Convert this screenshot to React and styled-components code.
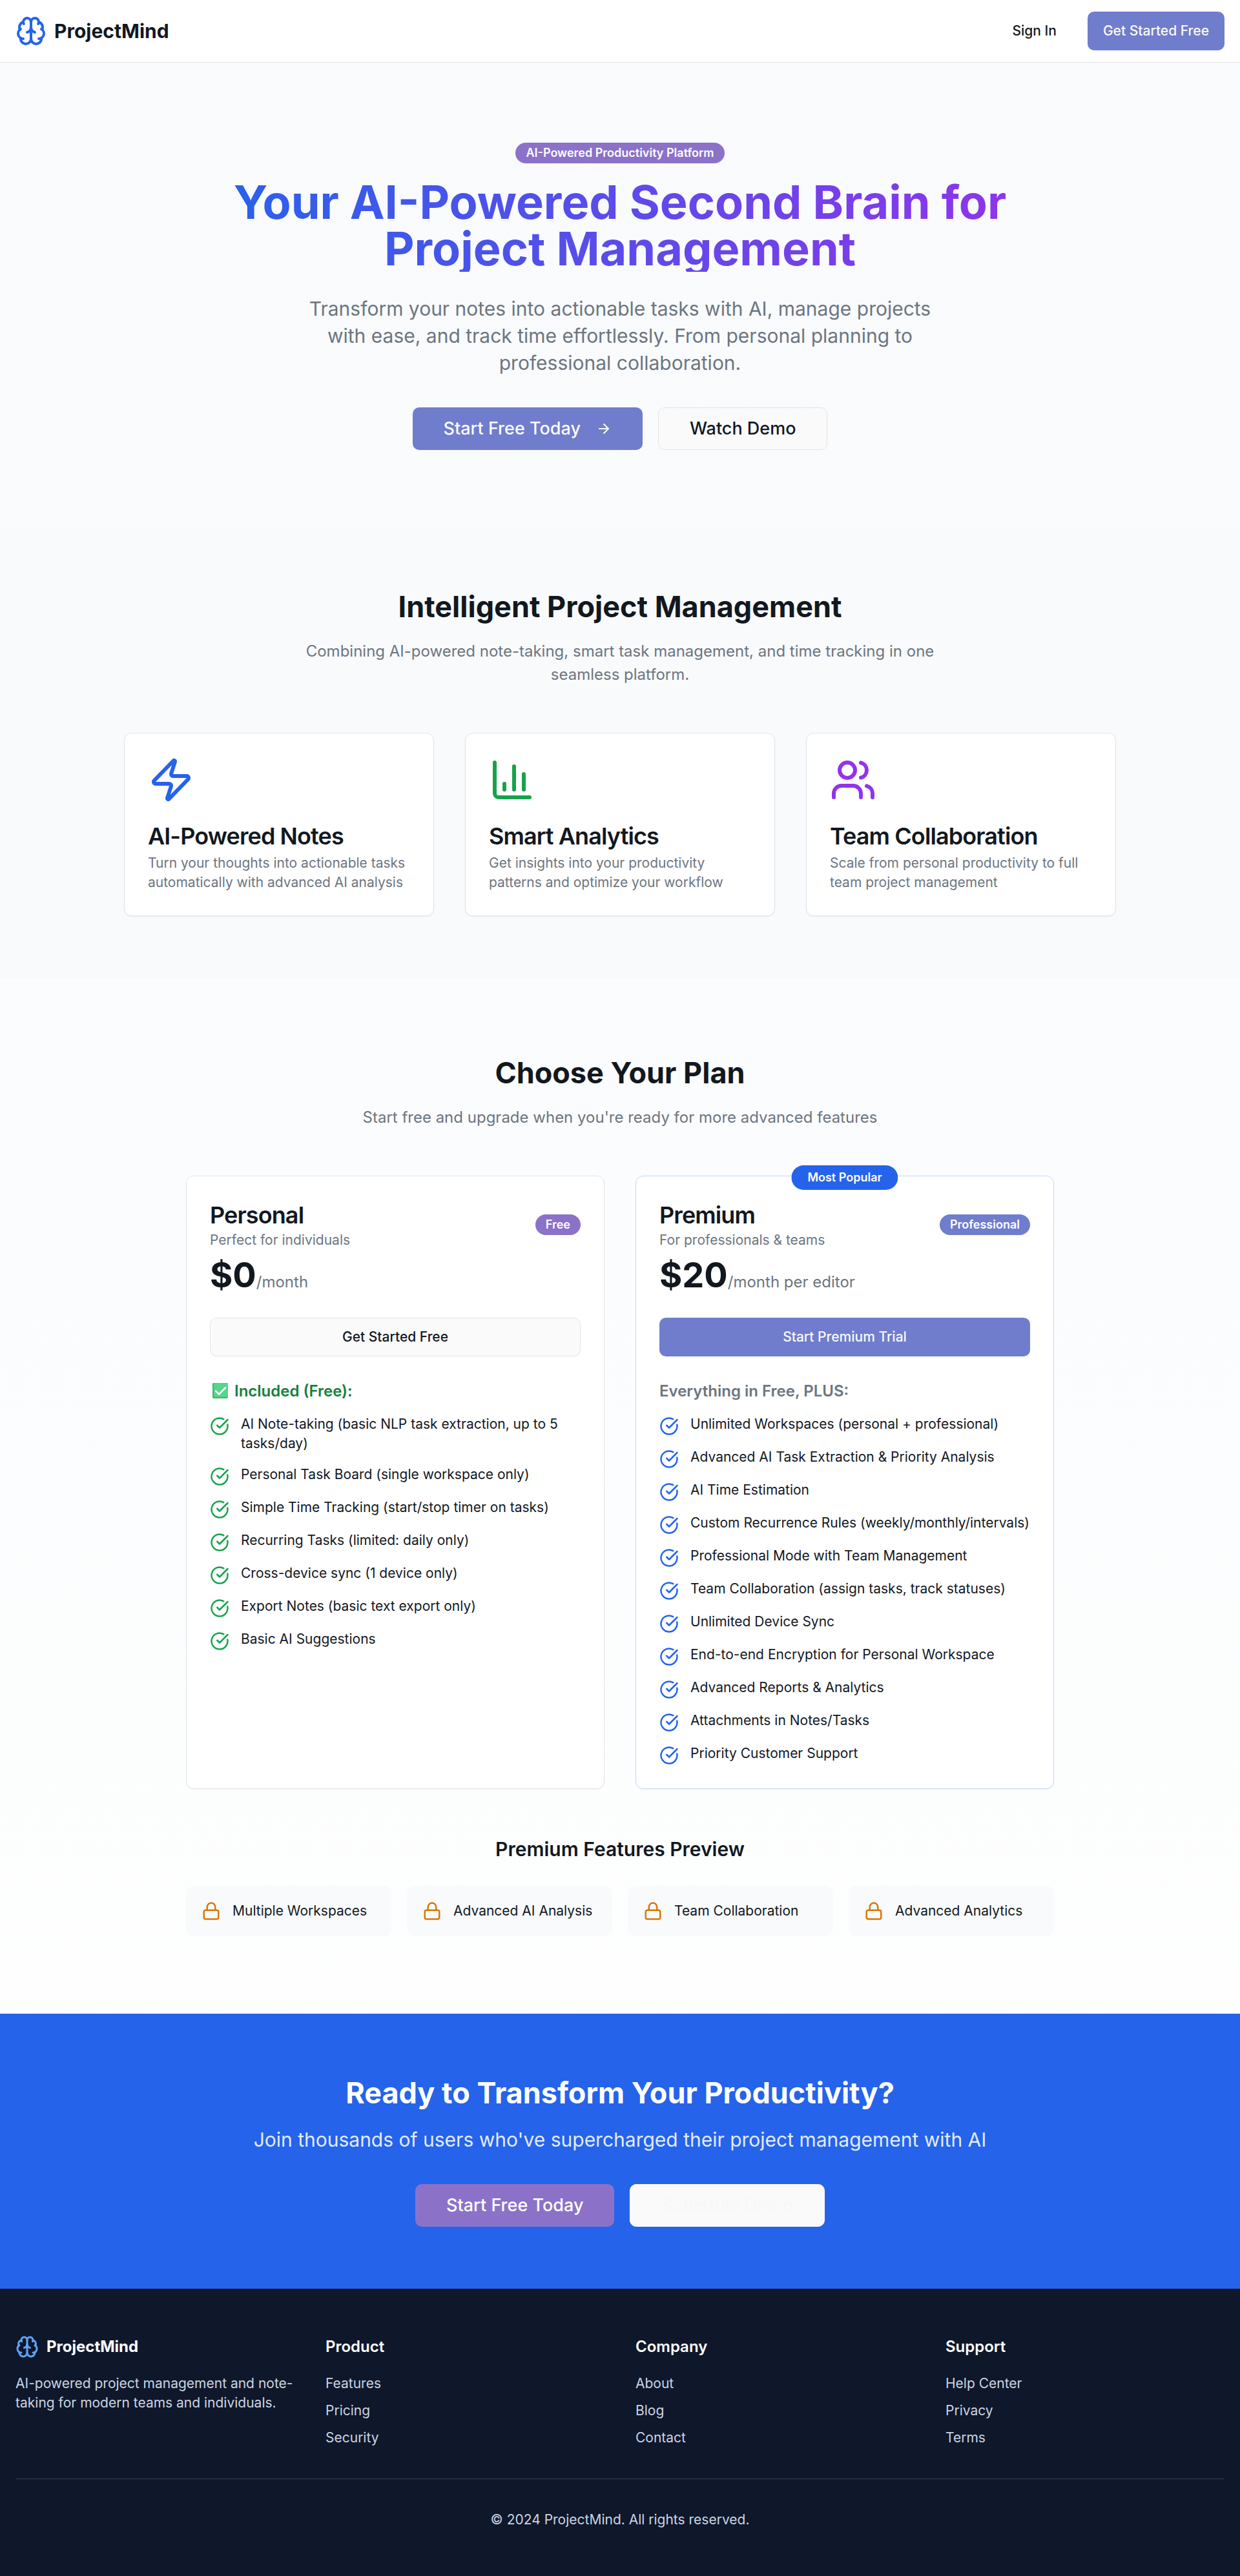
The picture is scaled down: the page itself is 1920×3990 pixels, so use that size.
import React from "react";
import styled, { createGlobalStyle, css } from "styled-components";
import {
  ArrowRight,
  Brain,
  ChartColumn,
  CircleCheckBig,
  Lock,
  Users,
  Zap,
} from "lucide-react";

const c = {
  ink: "#12181f",
  muted: "#6c757f",
  line: "#e2e4e9",
  primary: "#707dcc",
  secondary: "#8b72c8",
  surface: "#fafafa",
  slate: "#f8fafc",
  blue: "#2563eb",
  green: "#16a34a",
  purple: "#9333ea",
};

const GlobalStyle = createGlobalStyle`
  *, *::before, *::after { box-sizing: border-box; }
  body {
    margin: 0;
    font-family: Inter, "Liberation Sans", sans-serif;
    font-size: 24px;
    line-height: 36px;
    color: ${c.ink};
  }
  h1, h2, h3, h4, p, ul { margin: 0; padding: 0; }
  ul { list-style: none; }
  a { color: inherit; text-decoration: none; }
  svg { display: block; flex-shrink: 0; }
`;

const Page = styled.div`
  background: linear-gradient(to bottom, ${c.slate}, #ffffff);
`;

const Header = styled.header`
  display: flex;
  align-items: center;
  justify-content: space-between;
  padding: 18px 24px;
  background: #fff;
  border-bottom: 1px solid ${c.line};
`;

const Brand = styled.div`
  display: flex;
  align-items: center;
  gap: 12px;
  font-weight: 700;
  font-size: ${(p) => (p.$small ? "24px" : "30px")};
  line-height: ${(p) => (p.$small ? "36px" : "42px")};
  color: ${(p) => (p.$small ? "#fff" : c.ink)};
  margin-bottom: ${(p) => (p.$small ? "24px" : "0")};
`;

const Nav = styled.nav`
  display: flex;
  align-items: center;
  gap: 24px;
`;

const variants = {
  primary: css`
    background: ${c.primary};
    color: #fafafa;
  `,
  secondary: css`
    background: ${c.secondary};
    color: #fff;
  `,
  outline: css`
    background: ${c.surface};
    border: 1px solid ${c.line};
    color: ${c.ink};
  `,
  inverse: css`
    background: ${c.surface};
    border: 1px solid #fff;
    color: #f7f8fa;
  `,
  ghost: css`
    background: transparent;
    color: ${c.ink};
  `,
};

const Button = styled.button`
  display: inline-flex;
  align-items: center;
  justify-content: center;
  gap: 24px;
  height: ${(p) => (p.$large ? "66px" : "60px")};
  width: ${(p) => (p.$block ? "100%" : "auto")};
  padding: 0 ${(p) => (p.$large ? "48px" : "24px")};
  border: 0;
  border-radius: 10px;
  font-family: inherit;
  font-weight: 500;
  font-size: ${(p) => (p.$large ? "27px" : "21px")};
  line-height: ${(p) => (p.$large ? "42px" : "30px")};
  white-space: nowrap;
  cursor: pointer;
  ${(p) => variants[p.$variant || "primary"]}
`;

const Badge = styled.div`
  display: inline-flex;
  align-items: center;
  padding: 3px 15px;
  border: 1px solid transparent;
  border-radius: 999px;
  font-size: 18px;
  line-height: 24px;
  font-weight: 600;
  white-space: nowrap;
  color: #fff;
  background-color: ${(p) => (p.$primary ? c.primary : c.secondary)};
`;

const HeroBadge = styled(Badge)`
  margin-bottom: 24px;
`;

const PopularBadge = styled(Badge)`
  position: absolute;
  top: -17px;
  left: 50%;
  transform: translateX(-50%);
  padding: 6px 24px;
  background-color: ${c.blue};
`;

const Hero = styled.section`
  padding: 120px 24px;
  text-align: center;
`;

const HeroInner = styled.div`
  max-width: 1344px;
  margin: 0 auto;
`;

const HeroTitle = styled.h1`
  font-size: 72px;
  line-height: 72px;
  font-weight: 700;
  margin-bottom: 36px;
  color: transparent;
  background: linear-gradient(to right, ${c.blue}, ${c.purple});
  -webkit-background-clip: text;
  background-clip: text;
`;

const Lead = styled.p`
  max-width: ${(p) => (p.$wide ? "none" : "1008px")};
  margin: 0 auto 48px;
  font-size: 30px;
  line-height: 42px;
  color: ${(p) => (p.$wide ? "rgba(255, 255, 255, 0.9)" : c.muted)};
`;

const Actions = styled.div`
  display: flex;
  justify-content: center;
  gap: 24px;
`;

const Features = styled.section`
  padding: 96px 24px;
  background: ${c.slate};
`;

const Pricing = styled.section`
  padding: 120px 24px;
`;

const SectionHead = styled.div`
  text-align: center;
  margin-bottom: 72px;
`;

const SectionTitle = styled.h2`
  font-size: 45px;
  line-height: 54px;
  font-weight: 700;
  margin-bottom: 24px;
`;

const SectionText = styled.p`
  max-width: 1008px;
  margin: 0 auto;
  color: ${c.muted};
`;

const Grid = styled.div`
  display: grid;
  grid-template-columns: repeat(${(p) => p.$cols}, minmax(0, 1fr));
  gap: ${(p) => p.$gap || 48}px;
  max-width: ${(p) => (p.$max ? `${p.$max}px` : "none")};
  margin: 0 auto;
`;

const Card = styled.article`
  position: relative;
  padding: 36px;
  background: #fff;
  border: 1px solid ${(p) => (p.$highlight ? "#bfdbfe" : c.line)};
  border-radius: 12px;
  box-shadow: 0 1px 2px rgba(0, 0, 0, 0.05);
`;

const FeatureTitle = styled.h3`
  margin: 33px 0 9px;
  font-size: 36px;
  line-height: 36px;
  font-weight: 600;
  letter-spacing: -0.025em;
`;

const PlanTitle = styled(FeatureTitle)`
  margin: 0;
  line-height: 48px;
`;

const Small = styled.p`
  font-size: 21px;
  line-height: 30px;
  color: ${c.muted};
`;

const PlanHead = styled.div`
  display: flex;
  align-items: center;
  justify-content: space-between;
  margin-bottom: 9px;
`;

const Price = styled.div`
  font-size: 54px;
  line-height: 60px;
  font-weight: 700;
  margin-bottom: 36px;
`;

const Per = styled.span`
  font-size: 24px;
  line-height: 36px;
  font-weight: 400;
  color: ${c.muted};
`;

const ListTitle = styled.h4`
  display: flex;
  align-items: center;
  gap: 6px;
  margin: 36px 0 18px;
  font-size: 24px;
  line-height: 36px;
  font-weight: 600;
  color: ${(p) => (p.$green ? "#15803d" : c.muted)};
`;

const CheckList = styled.ul`
  display: flex;
  flex-direction: column;
  gap: 18px;
`;

const CheckItem = styled.li`
  display: flex;
  align-items: flex-start;
  gap: 18px;
  font-size: 21px;
  line-height: 30px;

  svg {
    margin-top: 3px;
    color: ${(p) => p.$color};
  }
`;

const PreviewTitle = styled.h3`
  margin: 72px 0 36px;
  text-align: center;
  font-size: 30px;
  line-height: 42px;
  font-weight: 600;
`;

const PreviewItem = styled.div`
  display: flex;
  align-items: center;
  gap: 18px;
  padding: 24px;
  border-radius: 12px;
  background: ${c.slate};
  font-size: 21px;
  line-height: 30px;

  svg {
    color: #d97706;
  }
`;

const Cta = styled.section`
  padding: 96px 24px;
  text-align: center;
  color: #fff;
  background: ${c.blue};
`;

const Footer = styled.footer`
  padding: 72px 24px;
  font-size: 21px;
  line-height: 30px;
  color: #cbd5e1;
  background: #0f172a;
`;

const FooterTitle = styled.h4`
  margin-bottom: 24px;
  font-size: 24px;
  line-height: 36px;
  font-weight: 600;
  color: #fff;
`;

const FooterLinks = styled.ul`
  display: flex;
  flex-direction: column;
  gap: 12px;
`;

const Copyright = styled.div`
  margin-top: 48px;
  padding-top: 48px;
  border-top: 1px solid #334155;
  text-align: center;
`;

const features = [
  {
    icon: <Zap size={72} color={c.blue} />,
    title: "AI-Powered Notes",
    text: "Turn your thoughts into actionable tasks automatically with advanced AI analysis",
  },
  {
    icon: <ChartColumn size={72} color={c.green} />,
    title: "Smart Analytics",
    text: "Get insights into your productivity patterns and optimize your workflow",
  },
  {
    icon: <Users size={72} color={c.purple} />,
    title: "Team Collaboration",
    text: "Scale from personal productivity to full team project management",
  },
];

const freeItems = [
  "AI Note-taking (basic NLP task extraction, up to 5 tasks/day)",
  "Personal Task Board (single workspace only)",
  "Simple Time Tracking (start/stop timer on tasks)",
  "Recurring Tasks (limited: daily only)",
  "Cross-device sync (1 device only)",
  "Export Notes (basic text export only)",
  "Basic AI Suggestions",
];

const premiumItems = [
  "Unlimited Workspaces (personal + professional)",
  "Advanced AI Task Extraction & Priority Analysis",
  "AI Time Estimation",
  "Custom Recurrence Rules (weekly/monthly/intervals)",
  "Professional Mode with Team Management",
  "Team Collaboration (assign tasks, track statuses)",
  "Unlimited Device Sync",
  "End-to-end Encryption for Personal Workspace",
  "Advanced Reports & Analytics",
  "Attachments in Notes/Tasks",
  "Priority Customer Support",
];

const previews = [
  "Multiple Workspaces",
  "Advanced AI Analysis",
  "Team Collaboration",
  "Advanced Analytics",
];

const footerColumns = [
  { title: "Product", links: ["Features", "Pricing", "Security"] },
  { title: "Company", links: ["About", "Blog", "Contact"] },
  { title: "Support", links: ["Help Center", "Privacy", "Terms"] },
];

function CheckMark() {
  return (
    <svg width="32" height="32" viewBox="0 0 32 32" fill="none" aria-hidden="true">
      <rect x="4" y="3" width="24" height="24" rx="2" fill="#3fb573" />
      <rect x="6" y="3" width="22" height="22" rx="2" fill="#56d68b" />
      <path
        d="M9 15.500l5 5L24 10.500"
        stroke="#fff"
        strokeWidth="2.500"
        strokeLinecap="round"
        strokeLinejoin="round"
      />
    </svg>
  );
}

function Checks({ items, color }) {
  return (
    <CheckList>
      {items.map((item) => (
        <CheckItem key={item} $color={color}>
          <CircleCheckBig size={30} />
          <span>{item}</span>
        </CheckItem>
      ))}
    </CheckList>
  );
}

export default function App() {
  return (
    <Page>
      <GlobalStyle />
      <Header>
        <Brand>
          <Brain size={48} color={c.blue} />
          <span>ProjectMind</span>
        </Brand>
        <Nav>
          <Button $variant="ghost">Sign In</Button>
          <Button>Get Started Free</Button>
        </Nav>
      </Header>

      <Hero>
        <HeroInner>
          <HeroBadge>AI-Powered Productivity Platform</HeroBadge>
          <HeroTitle>Your AI-Powered Second Brain for Project Management</HeroTitle>
          <Lead>
            Transform your notes into actionable tasks with AI, manage projects with ease, and
            track time effortlessly. From personal planning to professional collaboration.
          </Lead>
          <Actions>
            <Button $large>
              Start Free Today
              <ArrowRight size={24} />
            </Button>
            <Button $large $variant="outline">
              Watch Demo
            </Button>
          </Actions>
        </HeroInner>
      </Hero>

      <Features>
        <SectionHead>
          <SectionTitle>Intelligent Project Management</SectionTitle>
          <SectionText>
            Combining AI-powered note-taking, smart task management, and time tracking in one
            seamless platform.
          </SectionText>
        </SectionHead>
        <Grid $cols={3} $max={1536}>
          {features.map((f) => (
            <Card key={f.title}>
              {f.icon}
              <FeatureTitle>{f.title}</FeatureTitle>
              <Small>{f.text}</Small>
            </Card>
          ))}
        </Grid>
      </Features>

      <Pricing>
        <SectionHead>
          <SectionTitle>Choose Your Plan</SectionTitle>
          <SectionText>Start free and upgrade when you're ready for more advanced features</SectionText>
        </SectionHead>
        <Grid $cols={2} $max={1344}>
          <Card>
            <PlanHead>
              <div>
                <PlanTitle>Personal</PlanTitle>
                <Small>Perfect for individuals</Small>
              </div>
              <Badge>Free</Badge>
            </PlanHead>
            <Price>
              $0<Per>/month</Per>
            </Price>
            <Button $block $variant="outline">
              Get Started Free
            </Button>
            <ListTitle $green>
              <CheckMark />
              <span>Included (Free):</span>
            </ListTitle>
            <Checks items={freeItems} color={c.green} />
          </Card>
          <Card $highlight>
            <PopularBadge>Most Popular</PopularBadge>
            <PlanHead>
              <div>
                <PlanTitle>Premium</PlanTitle>
                <Small>For professionals &amp; teams</Small>
              </div>
              <Badge $primary>Professional</Badge>
            </PlanHead>
            <Price>
              $20<Per>/month per editor</Per>
            </Price>
            <Button $block>Start Premium Trial</Button>
            <ListTitle>Everything in Free, PLUS:</ListTitle>
            <Checks items={premiumItems} color={c.blue} />
          </Card>
        </Grid>
        <PreviewTitle>Premium Features Preview</PreviewTitle>
        <Grid $cols={4} $max={1344} $gap={24}>
          {previews.map((p) => (
            <PreviewItem key={p}>
              <Lock size={30} />
              <span>{p}</span>
            </PreviewItem>
          ))}
        </Grid>
      </Pricing>

      <Cta>
        <SectionTitle>Ready to Transform Your Productivity?</SectionTitle>
        <Lead $wide>
          Join thousands of users who've supercharged their project management with AI
        </Lead>
        <Actions>
          <Button $large $variant="secondary">
            Start Free Today
          </Button>
          <Button $large $variant="inverse">
            Schedule Demo
          </Button>
        </Actions>
      </Cta>

      <Footer>
        <Grid $cols={4}>
          <div>
            <Brand $small>
              <Brain size={36} color="#60a5fa" />
              <span>ProjectMind</span>
            </Brand>
            <p>AI-powered project management and note-taking for modern teams and individuals.</p>
          </div>
          {footerColumns.map((col) => (
            <div key={col.title}>
              <FooterTitle>{col.title}</FooterTitle>
              <FooterLinks>
                {col.links.map((l) => (
                  <li key={l}>
                    <a href="#">{l}</a>
                  </li>
                ))}
              </FooterLinks>
            </div>
          ))}
        </Grid>
        <Copyright>© 2024 ProjectMind. All rights reserved.</Copyright>
      </Footer>
    </Page>
  );
}
